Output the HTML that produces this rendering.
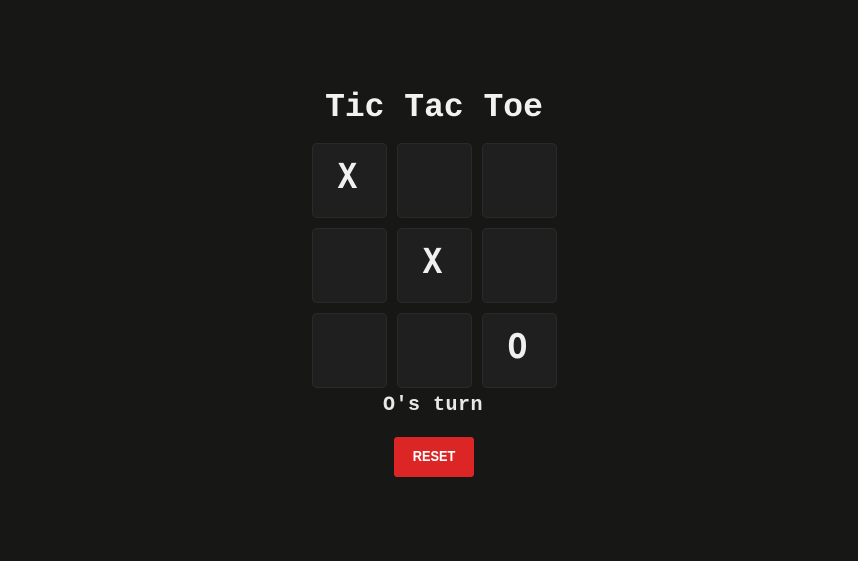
<!DOCTYPE html>
<html><head><style>
body{margin:0;width:858px;height:561px;background:#171716;font-family:"Liberation Mono",monospace;color:#eee;position:relative;overflow:hidden}
h1{position:absolute;top:88px;left:5px;width:858px;margin:0;text-align:center;font-size:33px;font-weight:bold;line-height:40px;letter-spacing:0;color:#f2f2f2}
.c{position:absolute;width:73px;height:73px;background:#1f1f1f;border:1px solid #2a2a2a;border-radius:5px;box-sizing:content-box;text-align:center;line-height:70px;font-size:38px;font-weight:bold;color:#f0f0f0}
.c span{display:inline-block;transform:scaleX(0.85);position:relative;left:-2px}
.t{position:absolute;top:394px;left:4px;width:858px;text-align:center;font-size:20px;font-weight:bold;letter-spacing:0.5px;color:#e8e8e8}
.b{position:absolute;left:394px;top:437px;width:80px;height:40px;background:#dc2626;border-radius:3px;color:#fff;font-family:"Liberation Sans",sans-serif;font-weight:bold;font-size:15px;line-height:40px;text-align:center}
.b span{display:inline-block;transform:scaleX(0.85)}
</style></head><body>
<h1>Tic Tac Toe</h1>
<div class="c" style="left:312px;top:143px"><span>X</span></div>
<div class="c" style="left:397px;top:143px"></div>
<div class="c" style="left:482px;top:143px"></div>
<div class="c" style="left:312px;top:228px"></div>
<div class="c" style="left:397px;top:228px"><span>X</span></div>
<div class="c" style="left:482px;top:228px"></div>
<div class="c" style="left:312px;top:313px"></div>
<div class="c" style="left:397px;top:313px"></div>
<div class="c" style="left:482px;top:313px"><span>O</span></div>
<div class="t">O's turn</div>
<div class="b"><span>RESET</span></div>
</body></html>
